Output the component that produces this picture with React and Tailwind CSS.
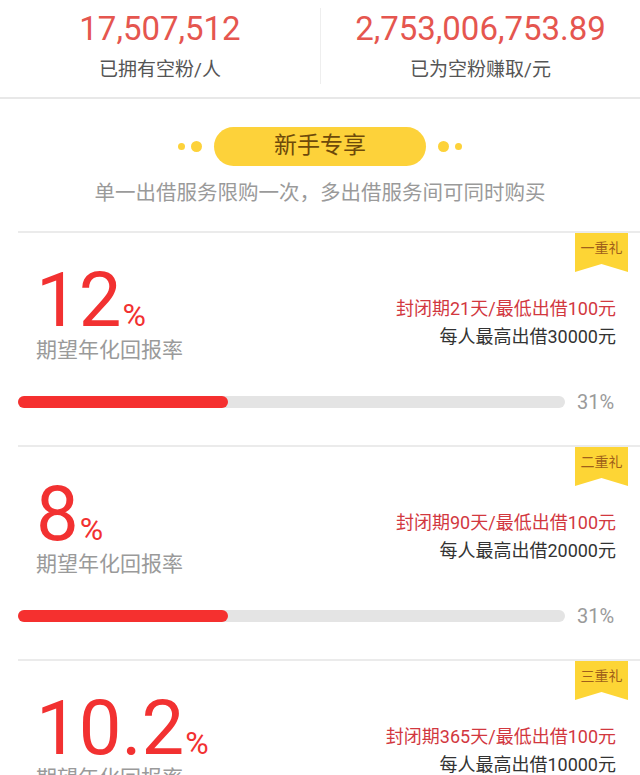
const plans = [
  { rate: "12", tag: "一重礼", days: 21, max: 30000, fill: "w-[38.4%]" },
  { rate: "8", tag: "二重礼", days: 90, max: 20000, fill: "w-[38.4%]" },
  { rate: "10.2", tag: "三重礼", days: 365, max: 10000, fill: "w-[38.4%]" },
];

function Ribbon({ text }) {
  return (
    <div className="absolute right-[12px] top-0 w-[53px] h-[39px]">
      <svg className="absolute inset-0" width="53" height="39" viewBox="0 0 53 39">
        <polygon points="0,0 53,0 53,39 26.5,31 0,39" fill="#fdd535" />
      </svg>
      <div className="relative pt-[5px] text-center text-[14px] leading-[20px] text-[#a0601a]">{text}</div>
    </div>
  );
}

function PlanCard({ plan }) {
  return (
    <div className="relative ml-[18px] border-t-2 border-[#ebebeb] pt-[31px] pb-[29px] pr-[24px]">
      <Ribbon text={plan.tag} />
      <div className="flex justify-between items-start">
        <div className="pl-[18px]">
          <div className="flex items-baseline text-[#f23131]">
            <span className="text-[76px] leading-[72px]">{plan.rate}</span>
            <span className="text-[32px] leading-none ml-[1px]">%</span>
          </div>
          <div className="text-[21px] leading-[28px] text-[#9a9a9a]">期望年化回报率</div>
        </div>
        <div className="mt-[31px] flex flex-col items-end text-[18px] leading-[28px]">
          <div className="text-[#d2383f]">封闭期{plan.days}天/最低出借100元</div>
          <div className="text-[#333]">每人最高出借{plan.max}元</div>
        </div>
      </div>
      <div className="mt-[24px] flex items-center gap-[12px] h-[28px]">
        <div className="flex-1 h-[12px] rounded-full bg-[#e4e4e4]">
          <div className={`h-full rounded-full bg-[#f5302f] ${plan.fill}`} />
        </div>
        <span className="w-[39px] text-[20px] text-[#9a9a9a]">31%</span>
      </div>
    </div>
  );
}

export default function App() {
  return (
    <div className="w-[640px] h-[775px] overflow-hidden bg-white font-['Roboto','Noto_Sans_CJK_SC',sans-serif]">
      <div className="flex h-[99px] border-b-2 border-[#e8e8e8]">
        <div className="w-1/2 flex flex-col items-center pt-[11px]">
          <div className="text-[33px] leading-[36px] text-[#e5564f]">17,507,512</div>
          <div className="mt-[11px] text-[19px] leading-[24px] text-[#555]">已拥有空粉/人</div>
        </div>
        <div className="w-px my-[8px] h-[76px] bg-[#eeeeee]" />
        <div className="flex-1 flex flex-col items-center pt-[11px]">
          <div className="text-[33px] leading-[36px] text-[#e5564f]">2,753,006,753.89</div>
          <div className="mt-[11px] text-[19px] leading-[24px] text-[#555]">已为空粉赚取/元</div>
        </div>
      </div>

      <div className="flex flex-col items-center pt-[28px] pb-[23px]">
        <div className="flex items-center">
          <span className="w-[7px] h-[7px] rounded-full bg-[#fdd23a]" />
          <span className="ml-[6px] w-[11px] h-[11px] rounded-full bg-[#fdd23a]" />
          <div className="mx-[12px] w-[212px] h-[39px] rounded-full bg-[#fdd23a] flex items-center justify-center text-[23px] text-[#6e4a0a]">
            新手专享
          </div>
          <span className="w-[11px] h-[11px] rounded-full bg-[#fdd23a]" />
          <span className="ml-[6px] w-[7px] h-[7px] rounded-full bg-[#fdd23a]" />
        </div>
        <div className="mt-[12px] text-[20.5px] leading-[30px] text-[#9a9a9a]">
          单一出借服务限购一次，多出借服务间可同时购买
        </div>
      </div>

      {plans.map((p) => (
        <PlanCard key={p.tag} plan={p} />
      ))}
    </div>
  );
}
